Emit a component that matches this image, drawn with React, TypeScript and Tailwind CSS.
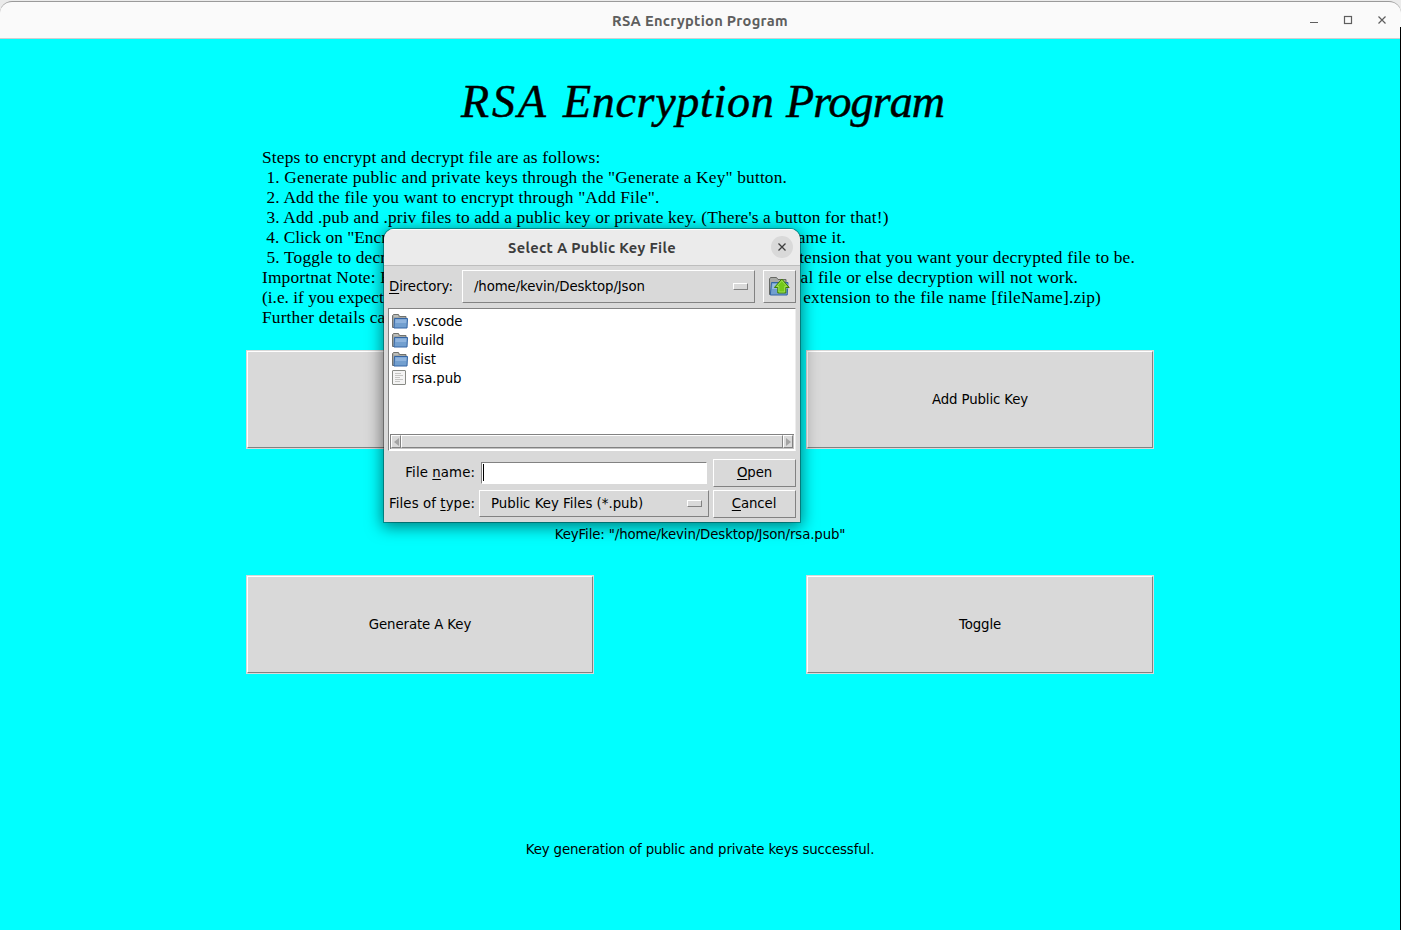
import React from "react";

const serif = "font-['Liberation_Serif',serif]";

function Folder() {
  return (
    <svg width="16" height="16" viewBox="0 0 16 16" className="block shrink-0">
      <path d="M.5 14.500V2.500l1-1h5l1 2h6.500v11z" fill="#a6a8a4" stroke="#70726e" />
      <path d="M2 3h4" stroke="#d0d1ce" />
      <path d="M2.500 5.500h13l-.5 9.500H2z" fill="#729fcf" stroke="#3465a4" />
      <path d="M3.500 6.500h11l-.3 3.500H3.300z" fill="#8fb4de" />
    </svg>
  );
}

function Doc() {
  return (
    <svg width="14" height="16" viewBox="0 0 14 16" className="block shrink-0">
      <rect x=".5" y=".5" width="13" height="14" rx=".5" fill="#f4f4f4" stroke="#888a85" />
      <path d="M3 3.500h6M3 5.500h8M3 7.500h5M3 9.500h8M3 11.500h5" stroke="#c6c6c4" />
    </svg>
  );
}

function UpFolder() {
  return (
    <svg width="22" height="22" viewBox="0 0 22 22" className="block">
      <path d="M1.500 19.500V4l1-1.500h6l1.500 2h8v15z" fill="#a8aaa6" stroke="#666864" />
      <path d="M3.500 7.500h16.500l-.8 12.500H2.300z" fill="#729fcf" stroke="#3465a4" />
      <path d="M4.500 9h15v5H4z" fill="#98bce1" />
      <path d="M13.800 4l7.400 8.500h-3.400v5.500h-8v-5.500H6.400z" fill="#73c91a" stroke="#3f7d04" />
      <path d="M13.800 5.600l5.100 5.900h-2.200V17h-5.900v-5.500H8.700z" fill="none" stroke="#a9e562" strokeWidth=".8" />
    </svg>
  );
}

function BigButton({ children }: { children: React.ReactNode }) {
  return (
    <button className="h-[99px] w-[348px] border border-[#d9d9d9] bg-[#d9d9d9]">
      <span className="flex h-full items-center justify-center border border-b-[#828282] border-l-white border-r-[#828282] border-t-white pb-px">
        {children}
      </span>
    </button>
  );
}

const raised = "border border-b-[#828282] border-l-white border-r-[#828282] border-t-white bg-[#d9d9d9]";

function Notch() {
  return <span className="h-[7px] w-[15px] border border-b-[#828282] border-l-white border-r-[#828282] border-t-white" />;
}

function Row({ icon, name }: { icon: React.ReactNode; name: string }) {
  return (
    <li className="flex h-[19px] items-center">
      <span className="w-5 pb-px">{icon}</span>
      {name}
    </li>
  );
}

function Dialog() {
  return (
    <section className="absolute left-[384px] top-[229px] flex h-[293px] w-[416px] flex-col overflow-hidden rounded-t-[10px] bg-[#d9d9d9] shadow-[0_0_0_1px_rgba(0,0,0,0.3),0_3px_16px_2px_rgba(0,0,0,0.5)]">
      <header className="relative flex h-[37px] shrink-0 items-center justify-center border-b border-[#bdbdbd] border-t border-t-white bg-[#ebebeb]">
        <h2 className="text-[14.670px] font-bold tracking-[0.310px] text-[#3d3d3d] font-['Ubuntu','Noto_Sans',sans-serif]">Select A Public Key File</h2>
        <button className="absolute right-[7px] top-[6px] flex size-[22px] items-center justify-center rounded-full bg-[#d9d9d9]">
          <svg width="8" height="8" viewBox="0 0 8 8"><path d="M.5.5l7 7M7.500.5l-7 7" stroke="#3d3d3d" strokeWidth="1.300" /></svg>
        </button>
      </header>
      <div className="flex h-[42px] shrink-0 items-center pb-[2px] pl-[5px] pr-[4px]">
        <label className="w-[73px]"><u className="underline-offset-2">D</u>irectory:</label>
        <div className={`${raised} flex h-[33px] w-[293px] items-center justify-between pl-[11px] pr-[6px]`}>
          <span>/home/kevin/Desktop/Json</span>
          <Notch />
        </div>
        <button className={`${raised} ml-auto flex h-[33px] w-[33px] items-center justify-center pr-px`}><UpFolder /></button>
      </div>
      <div className="mx-[4px] flex h-[143px] shrink-0 flex-col border border-b-white border-l-[#828282] border-r-[#ededed] border-t-[#828282] bg-white">
        <ul className="grow pl-[3px] pt-[3px]">
          <Row icon={<Folder />} name=".vscode" />
          <Row icon={<Folder />} name="build" />
          <Row icon={<Folder />} name="dist" />
          <Row icon={<Doc />} name="rsa.pub" />
        </ul>
        <div className="mb-px ml-px mr-px flex h-[15px] border-l border-t border-[#828282] bg-[#c3c3c3] pb-px">
          <span className={`${raised} flex w-[10px] items-center justify-center`}>
            <svg width="5" height="8" viewBox="0 0 5 8"><path d="M5 0v8L0 4z" fill="#a3a3a3" /></svg>
          </span>
          <span className={`${raised} grow`} />
          <span className={`${raised} mr-px flex w-[10px] items-center justify-center`}>
            <svg width="5" height="8" viewBox="0 0 5 8"><path d="M0 0v8l5-4z" fill="#a3a3a3" /></svg>
          </span>
        </div>
      </div>
      <div className="flex grow items-start pl-[4px] pr-[4px] pt-[8px]">
        <div className="flex flex-col">
          <div className="flex h-[28px] items-center pb-px">
            <label className="w-[93px] pr-[6px] text-right tracking-[0.080px]">File <u className="underline-offset-2">n</u>ame:</label>
            <div className="flex h-[22px] w-[226px] items-center border border-b-white border-l-[#828282] border-r-white border-t-[#828282] bg-white pl-px">
              <span className="h-[17px] w-px bg-black" />
            </div>
          </div>
          <div className="mt-[3px] flex h-[28px] items-center pb-px">
            <label className="w-[91px] whitespace-nowrap pr-[4px] text-right tracking-[0.080px]">Files of <u className="underline-offset-2">t</u>ype:</label>
            <div className={`${raised} flex h-[27px] w-[230px] items-center justify-between pl-[11px] pr-[6px]`}>
              <span className="tracking-normal">Public Key Files (*.pub)</span>
              <Notch />
            </div>
          </div>
        </div>
        <div className="ml-auto flex flex-col gap-[3px]">
          <button className={`${raised} h-[28px] w-[83px] pb-[2px]`}><u className="underline-offset-2">O</u>pen</button>
          <button className={`${raised} h-[28px] w-[83px] pb-[2px] pr-px`}><u className="underline-offset-2">C</u>ancel</button>
        </div>
      </div>
    </section>
  );
}

export default function App() {
  return (
    <div className="relative h-[930px] w-[1401px] overflow-hidden bg-[#ebebeb] pt-px text-[13.330px] leading-[19px] tracking-[-0.120px] text-black font-['DejaVu_Sans',sans-serif]">
      <div className="flex h-[929px] flex-col overflow-hidden rounded-t-[12px] border-t border-[#9a9a9a] bg-[#fafafa]">
        <header className="relative flex h-[37px] shrink-0 items-center justify-center border-b border-[#cfcfcf]">
          <h2 className="pr-px text-[14.670px] font-bold tracking-[0.280px] text-[#5e5e5e] font-['Ubuntu','Noto_Sans',sans-serif]">RSA Encryption Program</h2>
          <svg width="80" height="16" viewBox="0 0 80 16" className="absolute right-[12px] top-[10px]" fill="none" stroke="#5e5e5e" strokeWidth="1.200">
            <path d="M1 10.500h8M69.500 4.500l7 7M76.500 4.500l-7 7" />
            <rect x="35.500" y="4.500" width="7" height="7" />
          </svg>
        </header>
        <main className="flex grow flex-col border-r border-black bg-[#00ffff]">
          <h1 className="ml-[461px] mt-[33px] flex h-[60px] whitespace-nowrap text-[46px] italic leading-[60px] [-webkit-text-stroke:0.500px_black] font-['Z003','URW_Chancery_L','Zapf_Chancery','Liberation_Serif',serif]">
            <span className="w-[102px] tracking-[2.800px]">RSA</span>
            <span className="w-[223px] tracking-[0.700px]">Encryption</span>
            <span className="tracking-[-0.900px]">Program</span>
          </h1>
          <div className={`ml-[262px] mt-[16px] h-[180px] whitespace-pre text-[17.330px] leading-[20px] tracking-[0.170px] ${serif}`}>
            <p>Steps to encrypt and decrypt file are as follows:</p>
            <p> 1. Generate public and private keys through the "Generate a Key" button.</p>
            <p> 2. Add the file you want to encrypt through "Add File".</p>
            <p className="tracking-[0.150px]"> 3. Add .pub and .priv files to add a public key or private key. (There's a button for that!)</p>
            <p className="flex w-[584px] justify-between"><span className="tracking-normal"> 4. Click on "Encr</span><span>ame it.</span></p>
            <p className="flex w-[873px] justify-between"><span> 5. Toggle to decr</span><span>tension that you want your decrypted file to be.</span></p>
            <p className="flex w-[816px] justify-between"><span>Importnat Note: E</span><span>al file or else decryption will not work.</span></p>
            <p className="flex w-[839px] justify-between"><span className="tracking-normal">(i.e. if you expect</span><span>extension to the file name [fileName].zip)</span></p>
            <p>Further details ca</p>
          </div>
          <div className="ml-[246px] mt-[22px] flex gap-[212px]">
            <BigButton>{""}</BigButton>
            <BigButton>Add Public Key</BigButton>
          </div>
          <p className="mt-[76px] text-center">KeyFile: "/home/kevin/Desktop/Json/rsa.pub"</p>
          <div className="ml-[246px] mt-[31px] flex gap-[212px]">
            <BigButton>Generate A Key</BigButton>
            <BigButton>Toggle</BigButton>
          </div>
          <p className="mt-[166px] text-center">Key generation of public and private keys successful.</p>
        </main>
      </div>
      <div className="absolute right-0 top-[27px] h-[12px] w-px bg-black" />
      <Dialog />
    </div>
  );
}
